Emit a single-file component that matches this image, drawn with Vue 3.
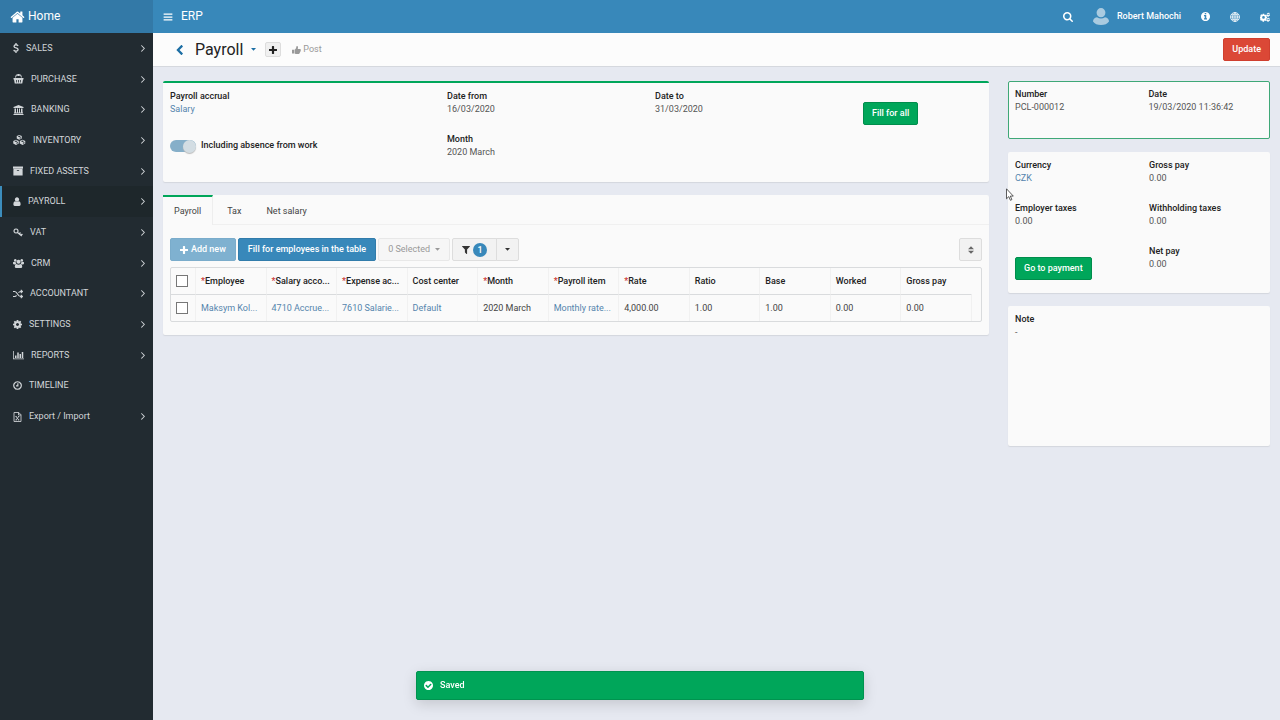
<script setup>
import { h, ref } from 'vue'

const disc = 'M1664 896q0 209-103 385.5t-279.5 279.5-385.5 103-385.5-103-279.5-279.5-103-385.5 103-385.5 279.5-279.5 385.5-103 385.5 103 279.5 279.5 103 385.5z'

// box: viewBox, w/h: drawn size
const icons = {
  home: { box: '48 190 1696 1400', w: 15, h: 12, d: 'M1472 992v480q0 26-19 45t-45 19h-384v-384h-256v384h-384q-26 0-45-19t-19-45v-480q0-1 .5-3t.5-3l575-474 575 474q1 2 1 6zm223-69l-62 74q-8 9-21 11h-3q-13 0-21-7l-692-577-692 577q-12 8-24 7-13-2-21-11l-62-74q-8-10-7-23.5t11-21.5l719-599q32-26 76-26t76 26l244 204v-195q0-14 9-23t23-9h192q14 0 23 9t9 23v408l219 182q10 8 11 21.5t-7 23.5z' },
  bars: { box: '0 0 16 16', w: 10, h: 10, d: 'M1 2.5h14v2H1zM1 7h14v2H1zM1 11.5h14v2H1z' },
  search: { box: '64 128 1664 1664', w: 10, h: 10, d: 'M1216 832q0-185-131.5-316.5t-316.5-131.5-316.5 131.5-131.5 316.5 131.5 316.5 316.5 131.5 316.5-131.5 131.5-316.5zm512 832q0 52-38 90t-90 38q-54 0-90-38l-343-342q-179 124-399 124-143 0-273.5-55.5t-225-150-150-225-55.5-273.5 55.5-273.5 150-225 225-150 273.5-55.5 273.5 55.5 225 150 150 225 55.5 273.5q0 220-124 399l343 343q37 37 37 90z' },
  avatar: { box: '0 0 16 17', w: 16, h: 17, d: 'M8 0a4.4 4.6 0 0 1 4.4 4.7A4.4 4.6 0 0 1 8 9.3a4.4 4.6 0 0 1-4.4-4.6A4.4 4.6 0 0 1 8 0zM4 9.2Q8 12 12 9.2q4 .8 4 4.3Q13.5 17 8 17T0 13.5Q0 10 4 9.2z' },
  info: { box: '128 128 1536 1536', w: 9, h: 9, d: 'M1152 1376v-160q0-14-9-23t-23-9h-96v-512q0-14-9-23t-23-9h-320q-14 0-23 9t-9 23v160q0 14 9 23t23 9h96v320h-96q-14 0-23 9t-9 23v160q0 14 9 23t23 9h448q14 0 23-9t9-23zm-128-896v-160q0-14-9-23t-23-9h-192q-14 0-23 9t-9 23v160q0 14 9 23t23 9h192q14 0 23-9t9-23z' + disc },
  globe: { box: '0 0 20 20', w: 10, h: 10, line: 1.6, d: 'M10 1a9 9 0 1 0 0 18a9 9 0 1 0 0-18zM10 1v18M1 10h18M2.5 5.5h15M2.5 14.5h15M10 1q-5 4-5 9t5 9M10 1q5 4 5 9t-5 9' },
  cogs: { box: '0 0 20 20', w: 10, h: 10, d: 'M5.5 3.5h3l.4 1.9 1.2.6 1.8-1.1 1.9 2-1 1.7.4 1.1 1 .3v2.7l-1.5.4-.5 1.1 1.1 1.7-2 2-1.7-1.1-1.1.5-.5 2h-2.8l-.5-2-1.2-.5L2 17.6l-2-2 1-1.6-.5-1.2L0 12.500V9.6l1-.4.5-1.1L.5 6.600l2-2 1.700 1 1-.4zM7 8.200a2.700 2.700 0 1 0 0 5.400 2.700 2.700 0 0 0 0-5.400zM16 1l1 .8 1.500-.3.8 1.500-.8 1.200.3 1 1.200.8-.5 1.600-1.500.2-.8.8-.2 1.300-1.600-.2-.8-1.200-1.400-.3-.3-1.600 1-1.200-.4-1.200.8-1.500 1.200-.2zM16.300 3.700a1.400 1.400 0 1 0 0 2.800 1.400 1.400 0 0 0 0-2.800zM16 11l1 .8 1.500-.3.8 1.500-.8 1.200.3 1 1.200.8-.5 1.600-1.500.2-.8.8-.2 1.300-1.600-.2-.8-1.200-1.400-.3-.3-1.600 1-1.200-.4-1.200.8-1.500 1.200-.2zM16.300 13.700a1.400 1.400 0 1 0 0 2.800 1.400 1.400 0 0 0 0-2.800z' },
  angle: { box: '580 480 600 990', w: 4, h: 7, d: 'M1171 960q0 13-10 23l-466 466q-10 10-23 10t-23-10l-50-50q-10-10-10-23t10-23l393-393-393-393q-10-10-10-23t10-23l50-50q10-10 23-10t23 10l466 466q10 10 10 23z' },
  back: { box: '346 26 1100 1612', w: 7, h: 10, d: 'M1427 301l-531 531 531 531q19 19 19 45t-19 45l-166 166q-19 19-45 19t-45-19l-742-742q-19-19-19-45t19-45l742-742q19-19 45-19t45 19l166 166q19 19 19 45t-19 45z' },
  caret: { box: '0 0 10 6', w: 5, h: 3, d: 'M0 0h10L5 5.5z' },
  sort: { box: '0 0 12 16', w: 6, h: 8, d: 'M0 6.5L6 .5l6 6zM0 9.5h12l-6 6z' },
  plus: { box: '192 128 1408 1408', w: 8, h: 8, d: 'M1600 736v192q0 40-28 68t-68 28h-416v416q0 40-28 68t-68 28h-192q-40 0-68-28t-28-68v-416h-416q-40 0-68-28t-28-68v-192q0-40 28-68t68-28h416v-416q0-40 28-68t68-28h192q40 0 68 28t28 68v416h416q40 0 68 28t28 68z' },
  thumb: { box: '0 0 18 16', w: 9, h: 8, d: 'M0 7.5h4V15H0zM5 7.5q2.5-1 3.300-4Q8.500.5 9.800.2q2.400 0 2.200 2.800L11.500 6H16q2 .3 1.500 2.200.4 1-.5 1.900.2 1.200-.8 2 0 1.300-1 1.800 0 1.800-2 2.100-4 .3-8.200-1.200z' },
  filter: { box: '192 256 1410 1410', w: 8, h: 8, d: 'M1595 295q17 41-14 70l-493 493v742q0 42-39 59-13 5-25 5-27 0-45-19l-256-256q-19-19-19-45v-486l-493-493q-31-29-14-70 17-39 59-39h1280q42 0 59 39z' },
  check: { box: '128 128 1536 1536', w: 9, h: 9, d: 'M1412 734q0-28-18-46l-91-90q-19-19-45-19t-45 19l-408 407-226-226q-19-19-45-19t-45 19l-91 90q-18 18-18 46 0 27 18 45l362 362q19 19 45 19 27 0 46-19l543-543q18-18 18-45z' + disc },
  dollar: { box: '0 0 12 20', w: 6, h: 10, line: 2.6, d: 'M10.2 5.8Q9 3.5 6 3.5T2 6.4Q2 9 6 9.7t4.2 3.5Q10 16.3 6 16.3T1.6 13.6M6 0v4M6 16v4' },
  basket: { box: '0 0 22 20', w: 11, h: 10, d: 'M1 8h20v3h-1l-1.5 8h-15L2 11H1zM6 12v5h1.5v-5zm4.2 0v5h1.6v-5zm4.3 0v5H16v-5zM4 7l1.5-4.5Q6 1 7.5 1H9V0h4v1h1.5Q16 1 16.5 2.5L18 7h-2l-1.2-4H13v1H9V3H7.2L6 7z' },
  bank: { box: '0 0 22 20', w: 11, h: 10, d: 'M11 0l10 4v2H1V4zM3 7h3v8h2V7h2v8h2V7h2v8h2V7h3v8h1v2H2v-2h1zM1 18h20v2H1z' },
  cubes: { box: '0 0 26 20', w: 13, h: 10, d: 'M12.5 0l5 2.2v5L12.5 9.500l-5-2.300v-5zM12.500 1.600L9.600 3l2.900 1.300L15.400 3zM13.300 5.600v2l2.700-1.200v-2zM6 9.500l5.500 2.600v5L6 19.800.5 17.100v-5zM6 11.100l-3 1.500 3 1.400 3-1.400zM6.800 15.400v2.300l3-1.400V14zM19 9.500l5.500 2.600v5L19 19.800l-5.500-2.700v-5zM19 11.100l-3 1.500 3 1.400 3-1.400zM19.800 15.400v2.300l3-1.400V14z' },
  archive: { box: '64 64 1664 1664', w: 10, h: 10, d: 'M1088 832q0-26-19-45t-45-19h-256q-26 0-45 19t-19 45 19 45 45 19h256q26 0 45-19t19-45zm576-192v960q0 26-19 45t-45 19h-1408q-26 0-45-19t-19-45v-960q0-26 19-45t45-19h1408q26 0 45 19t19 45zm64-448v256q0 26-19 45t-45 19h-1536q-26 0-45-19t-19-45v-256q0-26 19-45t45-19h1536q26 0 45 19t19 45z' },
  user: { box: '256 64 1280 1600', w: 8, h: 9, d: 'M1536 1399q0 109-62.5 187t-150.5 78h-854q-88 0-150.5-78t-62.5-187q0-85 8.5-160.5t31.5-152 58.5-131 94-89 134.5-34.5q131 128 313 128t313-128q76 0 134.5 34.5t94 89 58.5 131 31.5 152 8.5 160.5zm-256-887q0 159-112.5 271.5t-271.5 112.5-271.5-112.5-112.5-271.5 112.5-271.5 271.5-112.5 271.5 112.5 112.5 271.5z' },
  key: { box: '0 0 20 20', w: 10, h: 10, line: 2.4, d: 'M6 4a4 4 0 1 0 .1 0zM9 11l8.5 7M12.5 14l2.500-3M16 17l2.800-3' },
  users: { box: '0 0 22 20', w: 11, h: 10, d: 'M4.5 2a2.7 2.7 0 1 0 .1 0zM17.5 2a2.7 2.7 0 1 0 .1 0zM11 3.5a4 4 0 1 0 .1 0zM0 8.5q2-1.5 5.5-.2 0 2 1.500 3.500-2.500 0-3.500 1.200-3 .3-3.500-2zM22 8.500q-2-1.500-5.500-.2 0 2-1.500 3.500 2.500 0 3.500 1.200 3 .3 3.500-2zM7 12q4 2.500 8 0 3.500.5 3.500 5.500 0 2.500-3 2.500h-9q-3 0-3-2.500Q3.500 12.500 7 12z' },
  random: { box: '0 0 20 20', w: 10, h: 10, line: 2.4, d: 'M0 5h3.5Q6 5 9 10t6 5h4M0 15h3.5q2 0 3.5-2.2M11 7.5Q12.8 5 15 5h4M15.5 1.8L18.8 5l-3.300 3.200M15.500 11.800l3.300 3.200-3.300 3.200' },
  cog: { box: '128 128 1536 1536', w: 9, h: 9, d: 'M1152 896q0-106-75-181t-181-75-181 75-75 181 75 181 181 75 181-75 75-181zm512-109v222q0 12-8 23t-20 13l-185 28q-19 54-39 91 35 50 107 138 10 12 10 25t-9 23q-27 37-99 108t-94 71q-12 0-26-9l-138-108q-44 23-91 38-16 136-29 186-7 28-36 28h-222q-14 0-24.500-8.500t-11.500-21.500l-28-184q-49-16-90-37l-141 107q-10 9-25 9-14 0-25-11-126-114-165-168-7-10-7-23 0-12 8-23 15-21 51-66.500t54-70.500q-27-50-41-99l-183-27q-13-2-21-12.500t-8-23.500v-222q0-12 8-23t19-13l186-28q14-46 39-92-40-57-107-138-10-12-10-24 0-10 9-23 26-36 98.500-107.500t94.500-71.500q13 0 26 10l138 107q44-23 91-38 16-136 29-186 7-28 36-28h222q14 0 24.500 8.500t11.500 21.500l28 184q49 16 90 37l142-107q9-9 24-9 13 0 25 10 129 119 165 170 7 8 7 22 0 12-8 23-15 21-51 66.500t-54 70.500q26 50 41 98l183 28q13 2 21 12.500t8 23.500z' },
  chart: { box: '0 0 22 20', w: 11, h: 10, d: 'M0 2h1.5v15H22v1.5H0zM4 11h3v5H4zM8.5 5h3v11h-3zM13 8h3v8h-3zM17.5 4h3v12h-3z' },
  clock: { box: '0 0 18 18', w: 9, h: 9, line: 2.4, d: 'M9 1.5a7.5 7.5 0 1 0 .1 0zM9.700 4.500v5.200H6' },
  excel: { box: '0 0 18 20', w: 9, h: 10, line: 1.7, d: 'M2 1h9.5L16 5.5V19H2zM11 1v5h5M6 9l5.5 7M11.5 9L6 16M5 9h2.5M10 9h2.5M5 16h2.5M10 16h2.5' }
}

const Icon = (props) => {
  const i = icons[props.name]
  return h('svg', { viewBox: i.box, width: i.w, height: i.h, 'aria-hidden': 'true' }, [
    i.line
      ? h('path', { d: i.d, fill: 'none', stroke: 'currentColor', 'stroke-width': i.line })
      : h('path', { d: i.d, fill: 'currentColor', 'fill-rule': 'evenodd' })
  ])
}
Icon.props = ['name']

const menu = [
  { label: 'SALES', icon: 'dollar' },
  { label: 'PURCHASE', icon: 'basket' },
  { label: 'BANKING', icon: 'bank' },
  { label: 'INVENTORY', icon: 'cubes' },
  { label: 'FIXED ASSETS', icon: 'archive' },
  { label: 'PAYROLL', icon: 'user', active: true },
  { label: 'VAT', icon: 'key' },
  { label: 'CRM', icon: 'users' },
  { label: 'ACCOUNTANT', icon: 'random' },
  { label: 'SETTINGS', icon: 'cog' },
  { label: 'REPORTS', icon: 'chart' },
  { label: 'TIMELINE', icon: 'clock', leaf: true },
  { label: 'Export / Import', icon: 'excel' }
]

const tabs = ['Payroll', 'Tax', 'Net salary']
const activeTab = ref('Payroll')
const absence = ref(true)

const columns = [
  { label: 'Employee', required: true },
  { label: 'Salary acco...', required: true },
  { label: 'Expense ac...', required: true },
  { label: 'Cost center' },
  { label: 'Month', required: true },
  { label: 'Payroll item', required: true },
  { label: 'Rate', required: true },
  { label: 'Ratio' },
  { label: 'Base' },
  { label: 'Worked' },
  { label: 'Gross pay' }
]

const cells = [
  { text: 'Maksym Kol...', link: true },
  { text: '4710 Accrue...', link: true },
  { text: '7610 Salarie...', link: true },
  { text: 'Default', link: true },
  { text: '2020 March' },
  { text: 'Monthly rate...', link: true },
  { text: '4,000.00' },
  { text: '1.00' },
  { text: '1.00' },
  { text: '0.00' },
  { text: '0.00' }
]
</script>

<template>
  <div class="app">
    <aside class="sidebar">
      <a href="#" class="logo"><Icon name="home" /><span>Home</span></a>
      <nav>
        <ul class="menu">
          <li v-for="item in menu" :key="item.label">
            <a href="#" class="menu-link" :class="{ active: item.active }">
              <Icon :name="item.icon" />
              <span class="menu-label">{{ item.label }}</span>
              <Icon v-if="!item.leaf" name="angle" />
            </a>
          </li>
        </ul>
      </nav>
    </aside>

    <div class="page">
      <header class="topbar">
        <button class="plain" aria-label="Toggle menu"><Icon name="bars" /></button>
        <span class="brand">ERP</span>
        <button class="plain" aria-label="Search"><Icon name="search" /></button>
        <a href="#" class="profile"><Icon name="avatar" class="avatar" /><span>Robert Mahochi</span></a>
        <button class="plain" aria-label="Information"><Icon name="info" /></button>
        <button class="plain" aria-label="Language"><Icon name="globe" /></button>
        <button class="plain" aria-label="Settings"><Icon name="cogs" /></button>
      </header>

      <div class="titlebar">
        <a href="#" class="back" aria-label="Back"><Icon name="back" /></a>
        <h1>Payroll</h1>
        <button class="plain title-caret" aria-label="More"><Icon name="caret" /></button>
        <button class="add" aria-label="Add"><Icon name="plus" /></button>
        <button class="plain post"><Icon name="thumb" />Post</button>
        <button class="btn danger">Update</button>
      </div>

      <main class="content">
        <div class="main-col">
          <section class="panel summary">
            <div class="field">
              <span class="label">Payroll accrual</span>
              <a href="#">Salary</a>
            </div>
            <div class="field">
              <span class="label">Date from</span>
              <span>16/03/2020</span>
            </div>
            <div class="field">
              <span class="label">Date to</span>
              <span>31/03/2020</span>
            </div>
            <div class="field action"><button class="btn success">Fill for all</button></div>
            <label class="switch">
              <input v-model="absence" type="checkbox" />
              <span class="track"></span>
              <span class="label">Including absence from work</span>
            </label>
            <div class="field">
              <span class="label">Month</span>
              <span>2020 March</span>
            </div>
          </section>

          <section class="panel">
            <div class="tabs" role="tablist">
              <button
                v-for="tab in tabs"
                :key="tab"
                class="tab"
                role="tab"
                :aria-selected="tab === activeTab"
                :class="{ active: tab === activeTab }"
                @click="activeTab = tab"
              >{{ tab }}</button>
            </div>
            <div class="tab-body">
              <div class="toolbar">
                <button class="btn primary" disabled><Icon name="plus" />Add new</button>
                <button class="btn primary">Fill for employees in the table</button>
                <button class="btn default" disabled>0 Selected<Icon name="caret" /></button>
                <div class="group">
                  <button class="btn default filter" aria-label="Filter"><Icon name="filter" /><span class="badge">1</span></button>
                  <button class="btn default square" aria-label="Filter options"><Icon name="caret" /></button>
                </div>
                <button class="btn default square sort" aria-label="Reorder"><Icon name="sort" /></button>
              </div>
              <div class="grid">
                <table>
                  <thead>
                    <tr>
                      <th class="tick"><input type="checkbox" aria-label="Select all" /></th>
                      <th v-for="col in columns" :key="col.label"><i v-if="col.required">*</i>{{ col.label }}</th>
                    </tr>
                  </thead>
                  <tbody>
                    <tr>
                      <td class="tick"><input type="checkbox" aria-label="Select row" /></td>
                      <td v-for="(cell, i) in cells" :key="i">
                        <a v-if="cell.link" href="#">{{ cell.text }}</a>
                        <template v-else>{{ cell.text }}</template>
                      </td>
                    </tr>
                  </tbody>
                </table>
              </div>
            </div>
          </section>
        </div>

        <div class="side-col">
          <section class="panel side-panel number">
            <div class="field">
              <span class="label">Number</span>
              <span>PCL-000012</span>
            </div>
            <div class="field">
              <span class="label">Date</span>
              <span>19/03/2020 11:36:42</span>
            </div>
          </section>
          <section class="panel side-panel">
            <div class="field">
              <span class="label">Currency</span>
              <a href="#">CZK</a>
            </div>
            <div class="field">
              <span class="label">Gross pay</span>
              <span>0.00</span>
            </div>
            <div class="field">
              <span class="label">Employer taxes</span>
              <span>0.00</span>
            </div>
            <div class="field">
              <span class="label">Withholding taxes</span>
              <span>0.00</span>
            </div>
            <div class="field action"><button class="btn success">Go to payment</button></div>
            <div class="field">
              <span class="label">Net pay</span>
              <span>0.00</span>
            </div>
          </section>
          <section class="panel side-panel note">
            <div class="field">
              <span class="label">Note</span>
              <span>-</span>
            </div>
          </section>
        </div>
      </main>
    </div>

    <div class="toast" role="status"><Icon name="check" />Saved</div>

    <svg class="pointer" viewBox="0 0 8 13" width="8" height="13" aria-hidden="true">
      <path d="M.5.8v10l2.3-2.2 1.6 3.7 1.5-.7-1.6-3.5h3z" fill="#fff" stroke="#333" stroke-width=".8" />
    </svg>
  </div>
</template>

<style>
body {
  background: #e6e9f1;
}
</style>

<style scoped>
.app {
  display: flex;
  min-height: 100vh;
  font-family: Roboto, "Liberation Sans", sans-serif;
  font-size: 9px;
  line-height: 13px;
  color: #555;
  background: #e6e9f1;
}

.app *,
.app *::before,
.app *::after {
  box-sizing: border-box;
}

svg {
  flex: none;
  display: block;
}

a {
  color: #5585ad;
  text-decoration: none;
}

button {
  font: inherit;
  cursor: pointer;
}

.plain {
  display: flex;
  align-items: center;
  padding: 0;
  border: 0;
  background: none;
  color: inherit;
}

/* Sidebar */
.sidebar {
  flex: none;
  width: 153px;
  background: #222b31;
}

.logo {
  display: flex;
  align-items: center;
  gap: 3px;
  height: 33px;
  padding-left: 10px;
  background: #3379a7;
  color: #fff;
  font-size: 12px;
}

.menu {
  display: grid;
  grid-auto-rows: 1fr;
  min-height: 399px;
  margin: 0;
  padding: 0;
  list-style: none;
}

.menu-link {
  display: flex;
  align-items: center;
  gap: 7px;
  height: 100%;
  padding: 0 8px 0 11px;
  border-left: 2px solid transparent;
  color: #d2d6d9;
}

.menu-link.active {
  border-left-color: #3c8dbc;
  background: #1e272b;
}

.menu-label {
  flex: 1;
}

/* Top bars */
.page {
  flex: 1;
  min-width: 0;
}

.topbar {
  display: flex;
  align-items: center;
  height: 33px;
  padding: 0 10px;
  background: #3888ba;
  color: #fff;
}

.topbar > * {
  margin-right: 20px;
}

.topbar > :first-child {
  margin-right: 8px;
}

.topbar > :last-child {
  margin-right: 0;
}

.brand {
  flex: 1;
  font-size: 12px;
}

.profile {
  display: flex;
  align-items: center;
  gap: 8px;
  color: #fff;
  font-weight: 500;
}

.avatar {
  color: #aacbe0;
}

.titlebar {
  display: flex;
  align-items: center;
  height: 34px;
  padding: 0 10px 0 23px;
  border-bottom: 1px solid #d5d8de;
  background: #fcfcfc;
}

.back {
  color: #1c6ea4;
}

h1 {
  margin: 0 8px 0 12px;
  font-size: 16px;
  line-height: 20px;
  font-weight: 400;
  color: #222;
}

.title-caret {
  margin-right: 9px;
  color: #1c6ea4;
}

.add {
  display: grid;
  place-items: center;
  width: 16px;
  height: 15px;
  margin-right: 11px;
  padding: 0;
  border: 1px solid #ddd;
  border-radius: 2px;
  background: #f0f0f0;
  color: #222;
}

.post {
  flex: 1;
  gap: 2px;
  color: #999;
}

/* Buttons */
.btn {
  display: inline-flex;
  align-items: center;
  justify-content: center;
  height: 23px;
  padding: 0 8px;
  border: 1px solid;
  border-radius: 2px;
  white-space: nowrap;
  font-weight: 500;
}

.primary {
  background: #3888ba;
  border-color: #317cab;
  color: #fff;
}

.primary:disabled {
  gap: 3px;
  background: #7fb1d0;
  border-color: #7aaccb;
}

.success {
  background: #00a65a;
  border-color: #008d4c;
  color: #fff;
}

.danger {
  background: #db4836;
  border-color: #cf3f2f;
  color: #fff;
}

.default {
  background: #f2f2f2;
  border-color: #ddd;
  color: #333;
  font-weight: 400;
}

.default:disabled {
  gap: 5px;
  background: #f6f6f6;
  border-color: #e8e8e8;
  color: #999;
}

/* Content */
.content {
  display: grid;
  grid-template-columns: minmax(0, 826fr) minmax(0, 262fr);
  gap: 19px;
  padding: 14px 10px;
}

.main-col,
.side-col {
  display: flex;
  flex-direction: column;
  gap: 13px;
}

.panel {
  border-radius: 2px;
  background: #fafafa;
  box-shadow: 0 1px 1px #d3d6dd;
}

.field {
  display: flex;
  flex-direction: column;
  align-items: flex-start;
  min-height: 43px;
}

.label {
  color: #222;
  font-weight: 500;
}

.field.action {
  padding-top: 12px;
}

.summary {
  display: grid;
  grid-template-columns: 277fr 208fr 208fr 119fr;
  align-items: start;
  padding: 7px 7px 6px;
  border-top: 2px solid #00a65a;
}

.switch {
  display: flex;
  align-items: center;
  gap: 5px;
  min-height: 25px;
}

.switch input {
  position: absolute;
  opacity: 0;
}

.track {
  display: flex;
  width: 26px;
  height: 12px;
  border-radius: 6px;
  background: #86afc9;
}

.track::after {
  content: "";
  width: 13px;
  height: 13px;
  border-radius: 50%;
  background: #d3dde3;
  box-shadow: 0 1px 1px #bbb;
}

.switch input:checked + .track {
  justify-content: flex-end;
}

.tabs {
  display: flex;
  gap: 3px;
  height: 30px;
  border-bottom: 1px solid #f0f0f0;
}

.tab {
  height: 30px;
  padding: 0 11px;
  border: 0;
  border-top: 2px solid transparent;
  background: none;
  color: #444;
}

.tab.active {
  border-top-color: #00a65a;
  border-right: 1px solid #eee;
  background: #fafafa;
}

.tab-body {
  padding: 13px 7px;
}

.toolbar {
  display: flex;
  gap: 2px;
  margin-bottom: 6px;
}

.toolbar .btn {
  padding: 0 9px;
}

.toolbar .square {
  width: 23px;
  padding: 0;
}

.group {
  display: flex;
}

.filter {
  gap: 3px;
  border-radius: 2px 0 0 2px;
}

.group .square {
  margin-left: -1px;
  border-radius: 0 2px 2px 0;
}

.badge {
  width: 14px;
  height: 14px;
  border-radius: 50%;
  background: #3888ba;
  color: #fff;
  font-weight: 500;
  line-height: 14px;
}

.sort {
  margin-left: auto;
  color: #666;
}

.grid {
  padding-right: 9px;
  border: 1px solid #d9dbdd;
  border-radius: 2px;
}

table {
  width: 100%;
  table-layout: fixed;
  border-collapse: separate;
  border-spacing: 0;
}

th,
td {
  height: 26px;
  padding: 0 5px;
  border-right: 1px solid #f1f1f1;
  white-space: nowrap;
  text-align: left;
  color: #444;
}

th {
  height: 27px;
  border-bottom: 1px solid #d9dbdd;
  color: #222;
  font-weight: 500;
}

th:last-child {
  border-right-color: transparent;
}

.tick {
  width: 25px;
}

.tick input {
  appearance: none;
  display: block;
  width: 12px;
  height: 12px;
  margin: 0;
  border: 1px solid #777;
  background: #fff;
}

th i {
  color: #c33;
  font-style: normal;
}

/* Right column */
.side-panel {
  display: grid;
  grid-template-columns: 134fr 121fr;
  padding: 7px 0 5px 7px;
}

.number {
  padding: 6px 0 7px 6px;
  border: 1px solid #3fa877;
  box-shadow: none;
}

.note {
  min-height: 140px;
}

.toast {
  position: fixed;
  bottom: 20px;
  left: 50%;
  display: flex;
  align-items: center;
  gap: 7px;
  width: 35%;
  height: 29px;
  padding: 0 7px;
  transform: translateX(-50%);
  border: 1px solid #00934f;
  border-radius: 2px;
  background: #00a65a;
  color: #fff;
  font-weight: 500;
  box-shadow: 0 4px 14px rgba(0, 0, 0, 0.15);
}

.pointer {
  position: absolute;
  top: 188px;
  left: 1006px;
}
</style>
